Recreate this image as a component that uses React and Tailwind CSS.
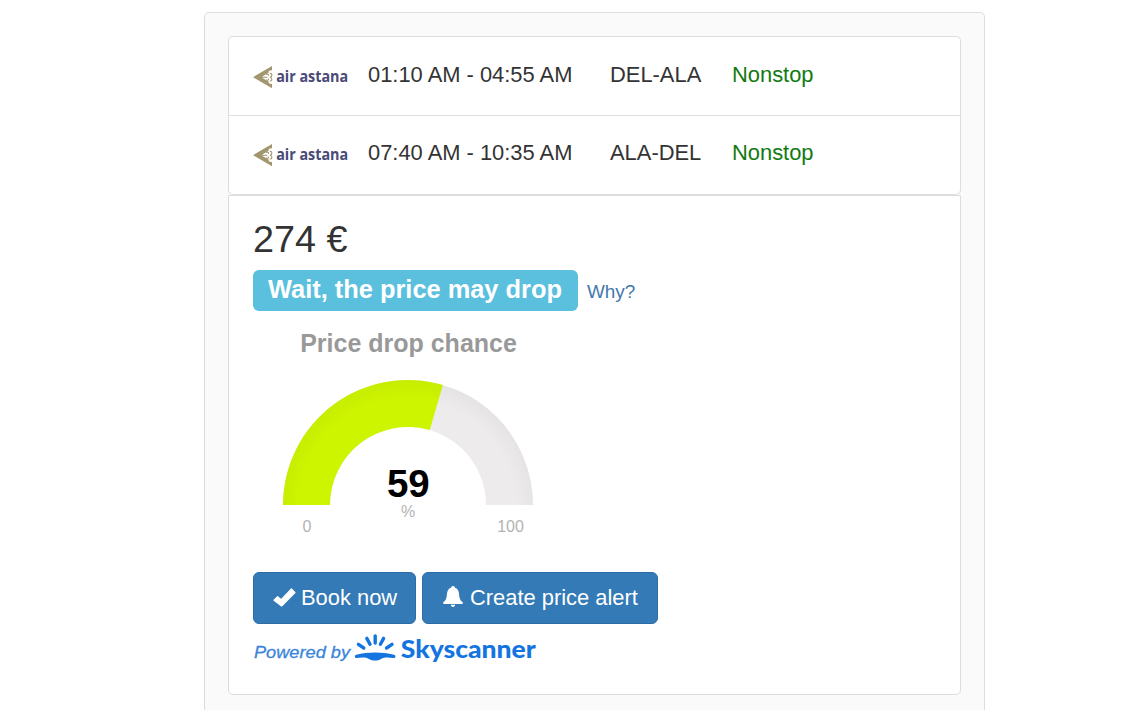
import React from "react";

const flights = [
  { time: "01:10 AM - 04:55 AM", route: "DEL-ALA", stops: "Nonstop" },
  { time: "07:40 AM - 10:35 AM", route: "ALA-DEL", stops: "Nonstop" },
];

const AirAstanaLogo = () => (
  <svg width="100" height="32" viewBox="0 0 100 32" className="block shrink-0">
    <path
      d="M0 16.2 L19 5 V9.5 C17 9 15.2 10 15.6 11.8 L9.8 15.2 C9 15.8 9 16.6 9.8 17.2 L15.6 20.6 C15.2 22.4 17 23.4 19 23 V27.3 Z"
      fill="#a3966f"
    />
    <path
      d="M9 16.2 H14.5 M13.4 13.8 C14.2 12.6 16 13.2 15.6 14.8 M13.4 18.6 C14.2 19.8 16 19.2 15.6 17.6 M16.8 12.4 C19.4 12 19.6 15.6 17 16.2 C19.6 16.8 19.4 20.4 16.8 20"
      fill="none"
      stroke="#a3966f"
      strokeWidth="1.1"
    />
    <text
      x="23.2"
      y="20.7"
      textLength="72"
      lengthAdjust="spacingAndGlyphs"
      fill="#4a4a78"
      fontFamily="'Open Sans', 'Noto Sans', sans-serif"
      fontWeight="700"
      fontSize="16"
    >
      air astana
    </text>
  </svg>
);

const CheckIcon = () => (
  <svg width="23" height="20" viewBox="0 0 23 20" className="block">
    <path
      d="M1 12.2 L4.6 8.6 L8.2 11.7 L18.4 0.9 L22 4.6 L8.6 18 Z"
      fill="#fff"
      stroke="#fff"
      strokeWidth="1.2"
      strokeLinejoin="round"
    />
  </svg>
);

const BellIcon = () => (
  <svg width="22" height="24" viewBox="0 0 22 24" className="block" fill="#fff">
    <path d="M11 0 C12.2 0 12.9 0.8 12.9 1.7 C15.7 2.5 16.8 4.8 17 7.8 C17.3 11.3 17.8 13.5 19.2 14.9 L20.8 16.2 C21.2 17.4 20.8 17.9 19.8 17.9 H2.2 C1.2 17.9 0.8 17.4 1.2 16.2 L2.8 14.9 C4.2 13.5 4.7 11.3 5 7.8 C5.2 4.8 6.3 2.5 9.1 1.7 C9.1 0.8 9.8 0 11 0 Z" />
    <path d="M8.8 18.8 H13.2 C12.9 21.6 9.1 21.6 8.8 18.8 Z" />
  </svg>
);

const SkyscannerLogo = () => (
  <svg width="290" height="34" viewBox="0 0 290 34" className="block">
    <text
      x="1"
      y="25"
      textLength="96"
      lengthAdjust="spacingAndGlyphs"
      fill="#3b84dc"
      fontFamily="'Liberation Sans', Arial, sans-serif"
      fontStyle="italic"
      fontSize="17"
      stroke="#3b84dc"
      strokeWidth="0.3"
    >
      Powered by
    </text>
    <g stroke="#1474e0" strokeWidth="3.4" strokeLinecap="round">
      <path d="M122.2 3 V10" />
      <path d="M113.8 5.4 L117 11.2" />
      <path d="M130.6 5.4 L127.4 11.2" />
      <path d="M105.4 11.4 L110.8 15" />
      <path d="M139 11.4 L133.6 15" />
    </g>
    <path
      d="M103.3 21.8 C115 18.7 129 18.7 141 21.8 C143.2 22.5 142.8 25.3 140.4 25.1 C135 24.2 131.4 24.2 128 26 C124.5 28 119.5 28 116 26 C112.6 24.2 109 24.2 103.8 25.1 C101.4 25.3 101.2 22.5 103.3 21.8 Z"
      fill="#1474e0"
    />
    <text
      x="147.8"
      y="25"
      textLength="135"
      lengthAdjust="spacingAndGlyphs"
      fill="#1474e0"
      fontFamily="Lato, sans-serif"
      fontWeight="900"
      fontSize="25"
    >
      Skyscanner
    </text>
  </svg>
);

// half-circle gauge, value goes from 0 to 100
const Gauge = ({ value }) => {
  const cx = 125;
  const cy = 126;
  const outer = 125;
  const inner = 78;

  const point = (r, percent) => {
    const angle = Math.PI * (1 - percent / 100);
    return `${cx + r * Math.cos(angle)} ${cy - r * Math.sin(angle)}`;
  };

  const arc = (from, to) =>
    `M${point(outer, from)} A${outer} ${outer} 0 0 1 ${point(outer, to)} ` +
    `L${point(inner, to)} A${inner} ${inner} 0 0 0 ${point(inner, from)} Z`;

  return (
    <svg
      width="250"
      height="160"
      viewBox="0 0 250 160"
      className="block"
      fontFamily="'Liberation Sans', Arial, sans-serif"
      textAnchor="middle"
    >
      <defs>
        <radialGradient id="edge" gradientUnits="userSpaceOnUse" cx={cx} cy={cy + 3} r="128">
          <stop offset="0.84" stopColor="#000" stopOpacity="0" />
          <stop offset="1" stopColor="#000" stopOpacity="0.035" />
        </radialGradient>
      </defs>
      <path d={arc(0, 100)} fill="#edebeb" />
      <path d={arc(0, value)} fill="#cef500" />
      <path d={arc(0, 100)} fill="url(#edge)" />
      <text x="125.3" y="117.5" fontSize="38.5" fontWeight="700" fill="#000">
        {value}
      </text>
      <text x="125" y="137.5" fontSize="16" fill="#b3b3b3">
        %
      </text>
      <text x="24" y="153" fontSize="16" fill="#b3b3b3">
        0
      </text>
      <text x="227.5" y="153" fontSize="16" fill="#b3b3b3">
        100
      </text>
    </svg>
  );
};

const FlightRow = ({ flight }) => (
  <li className="flex h-[79px] items-start border-b border-[#ddd] pl-6 pt-[21px] leading-8 last:rounded-b-[5px] last:pt-5">
    <div className="mr-[15px] pt-[3px]">
      <AirAstanaLogo />
    </div>
    <span className="w-[242px] pt-px">{flight.time}</span>
    <span className="w-[122px] pt-px">{flight.route}</span>
    <span className="pt-px text-[#127a12]">{flight.stops}</span>
  </li>
);

const App = () => {
  return (
    <div className="h-[710px] overflow-hidden bg-white pl-[204px] pt-3 font-['Liberation_Sans',Arial,sans-serif] text-[21.9px] text-[#333]">
      <div className="h-[740px] w-[781px] rounded-[5px] border border-[#ddd] bg-[#fafafa] p-[23px]">
        <ul className="w-[733px] rounded-[5px] border border-b-0 border-[#ddd] bg-white">
          {flights.map((flight) => (
            <FlightRow key={flight.route} flight={flight} />
          ))}
        </ul>

        <div className="h-[500px] w-[733px] rounded-b-[5px] border border-[#ddd] bg-white pl-6 pt-[22px]">
          <h2 className="text-[37.8px] leading-[42px]">274 €</h2>

          <div className="mt-[10px] flex">
            <span className="h-[41px] w-[325px] rounded-[6px] bg-[#5bc0de] pr-px text-center text-[25.4px] font-bold leading-[39px] text-white">
              Wait, the price may drop
            </span>
            <a href="#" className="ml-[9px] text-[18.9px] leading-[43px] text-[#4378ae]">
              Why?
            </a>
          </div>

          <div className="ml-[30px] mt-[15px] w-[250px]">
            <h3 className="pl-px text-center text-[25px] font-bold leading-[30px] text-[#999]">
              Price drop chance
            </h3>
            <div className="mt-[21px]">
              <Gauge value={59} />
            </div>
          </div>

          <div className="mt-[33px] flex gap-[6px] text-white">
            <button className="flex h-[52px] w-[163px] items-center rounded-[6px] border border-[#2e6da4] bg-[#337ab7] pl-[19px] leading-8">
              <CheckIcon />
              <span className="ml-[5px] whitespace-nowrap">Book now</span>
            </button>
            <button className="flex h-[52px] w-[236px] items-center rounded-[6px] border border-[#2e6da4] bg-[#337ab7] pl-[19px] leading-8">
              <BellIcon />
              <span className="ml-[6px] whitespace-nowrap">Create price alert</span>
            </button>
          </div>

          <div className="mt-[9px]">
            <SkyscannerLogo />
          </div>
        </div>
      </div>
    </div>
  );
};

export default App;
